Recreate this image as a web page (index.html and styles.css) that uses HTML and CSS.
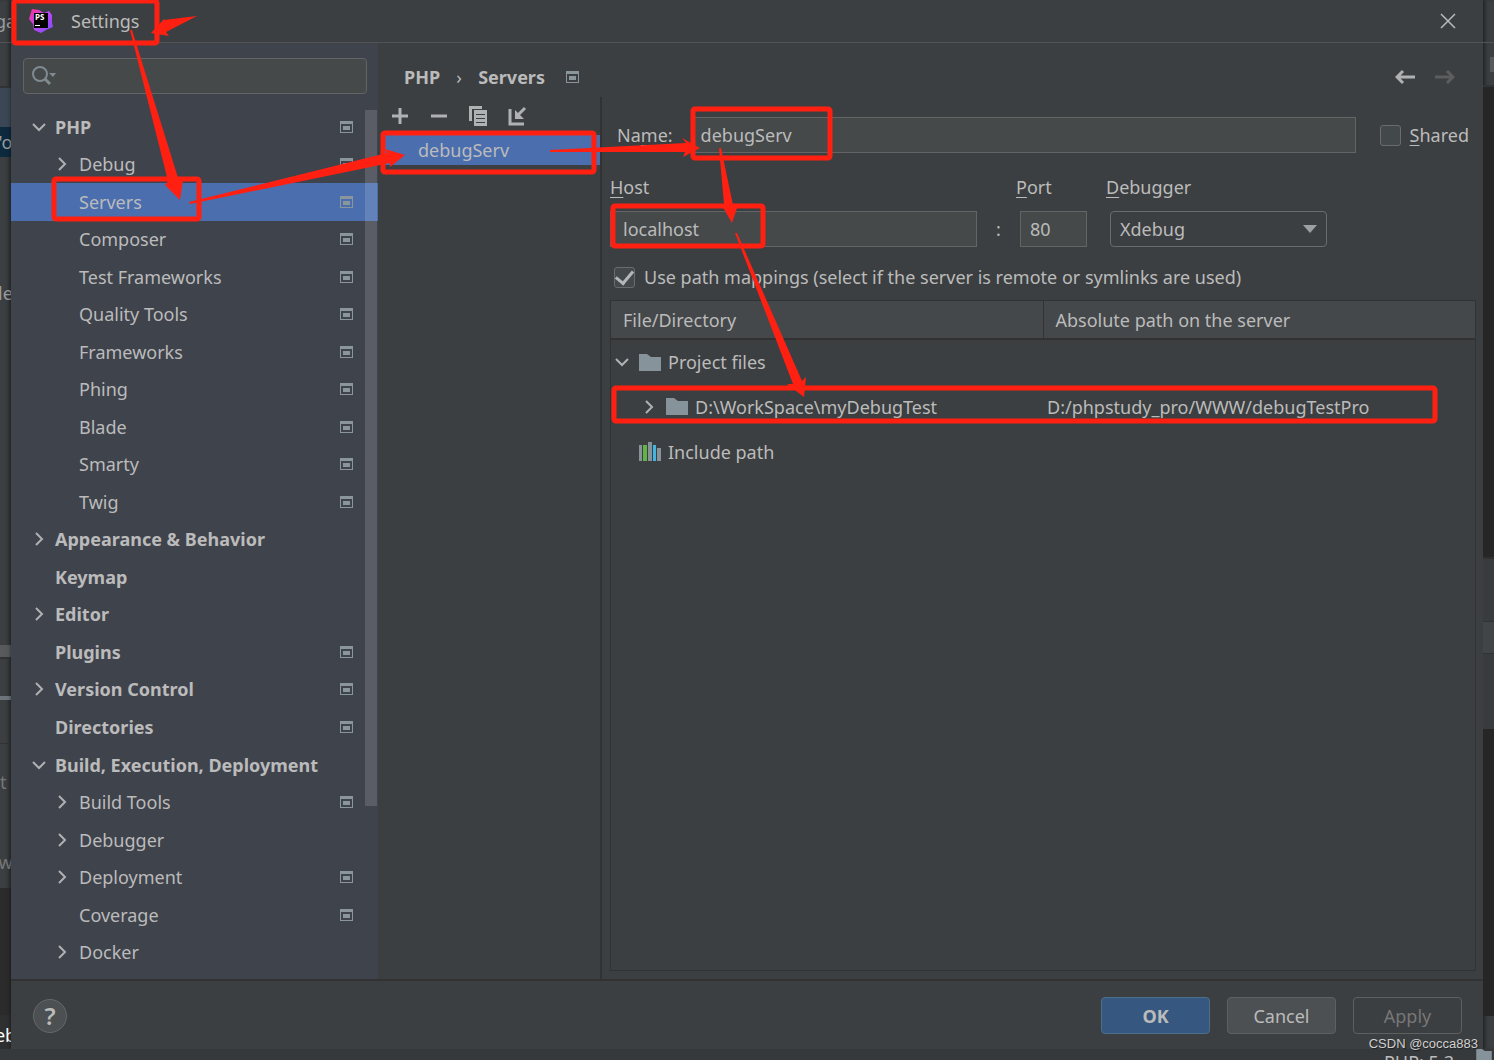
FILE: index.html
```html
<!DOCTYPE html>
<html lang="en">
<head>
<meta charset="utf-8">
<title>Settings</title>
<link rel="stylesheet" href="styles.css">
</head>
<body>
<svg class="defs" aria-hidden="true">
  <symbol id="scope" viewBox="0 0 13 12"><path fill="#8a959c" fill-rule="evenodd" d="M0 0h13v12H0zM1 3v8h11V3z"/><path fill="#8a959c" d="M3 5h7v4H3z"/></symbol>
  <symbol id="right" viewBox="0 0 14 14"><path d="M4 1l6 6-6 6" fill="none" stroke="#afb1b3" stroke-width="2"/></symbol>
  <symbol id="down" viewBox="0 0 14 14"><path d="M1 4l6 6 6-6" fill="none" stroke="#afb1b3" stroke-width="2"/></symbol>
  <symbol id="folder" viewBox="0 0 22 17"><path d="M0 0h8l4 3h10v14H0z" fill="#87939a"/></symbol>
</svg>
<div class="desktop">
  <div class="edge left" aria-hidden="true">
    <span class="l1">ga</span><span class="l2"></span><span class="l3"></span><span class="l4">'o</span><span class="l5">le</span><span class="l6"></span><span class="l7"></span><span class="l8"></span><span class="l9">t</span><span class="l10">w</span><span class="l11"></span><span class="l12">eb</span>
  </div>
  <main class="dialog">
    <header class="titlebar">
      <svg class="logo" viewBox="0 0 24 24">
        <defs><linearGradient id="lg" x1="0" y1="0" x2="1" y2="1"><stop offset="0" stop-color="#ff318c"/><stop offset=".5" stop-color="#b74af7"/><stop offset="1" stop-color="#7b4dff"/></linearGradient></defs>
        <path fill="url(#lg)" d="M3 0l7 1 5 3 5-2 3 4v7l1 5-7 3-5 3-7-3-1-6-4-5z"/>
        <path d="M5 4h14v15H5z"/>
        <text class="logo-text" x="6" y="11">PS</text>
        <path fill="#fff" d="M6 16h5v1H6z"/>
      </svg>
      <h1>Settings</h1>
      <button class="icon-button close" aria-label="Close"><svg width="16" height="16" viewBox="0 0 16 16"><path d="M1 1l14 14M15 1L1 15" stroke="#b8babc" stroke-width="1.5"/></svg></button>
    </header>
    <div class="content">
      <nav class="sidebar">
        <label class="search">
          <svg width="26" height="20" viewBox="0 0 26 20"><circle cx="8" cy="8" r="7" fill="none" stroke="#7f8b91" stroke-width="2"/><path d="M13 13l5 5" stroke="#7f8b91" stroke-width="3"/><path d="M17 7h7l-3 4z" fill="#7f8b91"/></svg>
          <input type="text" aria-label="Search settings">
        </label>
        <ul class="tree">
          <li class="top"><button><svg class="chev"><use href="#down"/></svg><span>PHP</span><svg class="scope"><use href="#scope"/></svg></button></li>
          <li><button><svg class="chev"><use href="#right"/></svg><span>Debug</span><svg class="scope"><use href="#scope"/></svg></button></li>
          <li class="selected"><button><i class="chev"></i><span>Servers</span><svg class="scope"><use href="#scope"/></svg></button></li>
          <li><button><i class="chev"></i><span>Composer</span><svg class="scope"><use href="#scope"/></svg></button></li>
          <li><button><i class="chev"></i><span>Test Frameworks</span><svg class="scope"><use href="#scope"/></svg></button></li>
          <li><button><i class="chev"></i><span>Quality Tools</span><svg class="scope"><use href="#scope"/></svg></button></li>
          <li><button><i class="chev"></i><span>Frameworks</span><svg class="scope"><use href="#scope"/></svg></button></li>
          <li><button><i class="chev"></i><span>Phing</span><svg class="scope"><use href="#scope"/></svg></button></li>
          <li><button><i class="chev"></i><span>Blade</span><svg class="scope"><use href="#scope"/></svg></button></li>
          <li><button><i class="chev"></i><span>Smarty</span><svg class="scope"><use href="#scope"/></svg></button></li>
          <li><button><i class="chev"></i><span>Twig</span><svg class="scope"><use href="#scope"/></svg></button></li>
          <li class="top"><button><svg class="chev"><use href="#right"/></svg><span>Appearance &amp; Behavior</span></button></li>
          <li class="top"><button><i class="chev"></i><span>Keymap</span></button></li>
          <li class="top"><button><svg class="chev"><use href="#right"/></svg><span>Editor</span></button></li>
          <li class="top"><button><i class="chev"></i><span>Plugins</span><svg class="scope"><use href="#scope"/></svg></button></li>
          <li class="top"><button><svg class="chev"><use href="#right"/></svg><span>Version Control</span><svg class="scope"><use href="#scope"/></svg></button></li>
          <li class="top"><button><i class="chev"></i><span>Directories</span><svg class="scope"><use href="#scope"/></svg></button></li>
          <li class="top"><button><svg class="chev"><use href="#down"/></svg><span>Build, Execution, Deployment</span></button></li>
          <li><button><svg class="chev"><use href="#right"/></svg><span>Build Tools</span><svg class="scope"><use href="#scope"/></svg></button></li>
          <li><button><svg class="chev"><use href="#right"/></svg><span>Debugger</span></button></li>
          <li><button><svg class="chev"><use href="#right"/></svg><span>Deployment</span><svg class="scope"><use href="#scope"/></svg></button></li>
          <li><button><i class="chev"></i><span>Coverage</span><svg class="scope"><use href="#scope"/></svg></button></li>
          <li><button><svg class="chev"><use href="#right"/></svg><span>Docker</span></button></li>
        </ul>
        <div class="scrollbar"></div>
      </nav>
      <section class="page">
        <div class="crumbs">
          <b>PHP</b><span class="sep">›</span><b>Servers</b><svg class="scope"><use href="#scope"/></svg>
          <span class="history">
            <button class="icon-button" aria-label="Back"><svg width="20" height="16" viewBox="0 0 20 16"><path d="M20 8H2M8 2L2 8l6 6" fill="none" stroke="#afb1b3" stroke-width="3"/></svg></button>
            <button class="icon-button" aria-label="Forward" disabled><svg width="20" height="16" viewBox="0 0 20 16"><path d="M0 8h18M12 2l6 6-6 6" fill="none" stroke="#5b5d5f" stroke-width="3"/></svg></button>
          </span>
        </div>
        <div class="split">
          <div class="servers">
            <div class="toolbar">
              <button class="icon-button" aria-label="Add"><svg width="20" height="20" viewBox="0 0 20 20"><path d="M10 2v16M2 10h16" stroke="#afb1b3" stroke-width="3"/></svg></button>
              <button class="icon-button" aria-label="Remove"><svg width="20" height="20" viewBox="0 0 20 20"><path d="M2 10h16" stroke="#afb1b3" stroke-width="3"/></svg></button>
              <button class="icon-button" aria-label="Copy"><svg width="20" height="20" viewBox="0 0 20 20"><path d="M1 0h13v3H4v12H1z" fill="#afb1b3"/><path fill="#afb1b3" fill-rule="evenodd" d="M6 4h13v16H6zM8 8v1h9V8zM8 12v1h9v-1zM8 16v1h9v-1z"/></svg></button>
              <button class="icon-button" aria-label="Import"><svg width="20" height="20" viewBox="0 0 20 20"><path d="M3 3v15h14" fill="none" stroke="#afb1b3" stroke-width="3"/><path d="M18 2l-8 8" stroke="#afb1b3" stroke-width="3"/><path d="M8 4v9h9z" fill="#afb1b3"/></svg></button>
            </div>
            <ul class="server-list"><li><button>debugServ</button></li></ul>
          </div>
          <form class="form">
            <div class="name-row">
              <label for="name">Na<u>m</u>e:</label>
              <input id="name" type="text" value="debugServ">
              <label class="check"><input type="checkbox"><span><u>S</u>hared</span></label>
            </div>
            <div class="fields">
              <label for="host"><u>H</u>ost</label><span></span><label for="port"><u>P</u>ort</label><label for="debugger"><u>D</u>ebugger</label>
              <input id="host" type="text" value="localhost">
              <span class="colon">:</span>
              <input id="port" type="text" value="80">
              <span class="select"><select id="debugger"><option>Xdebug</option></select><svg width="14" height="8" viewBox="0 0 14 8"><path d="M0 0h14L7 8z" fill="#9da0a2"/></svg></span>
            </div>
            <label class="check mappings"><input type="checkbox" checked><span>Use path mappings (select if the server is remote or symlinks are used)</span></label>
            <div class="table-box">
              <table>
                <thead><tr><th>File/Directory</th><th>Absolute path on the server</th></tr></thead>
                <tbody>
                  <tr><td><div class="cell"><svg class="chev"><use href="#down"/></svg><svg class="kind"><use href="#folder"/></svg>Project files</div></td><td></td></tr>
                  <tr><td><div class="cell nested"><svg class="chev"><use href="#right"/></svg><svg class="kind"><use href="#folder"/></svg>D:\WorkSpace\myDebugTest</div></td><td>D:/phpstudy_pro/WWW/debugTestPro</td></tr>
                  <tr><td><div class="cell"><i class="chev"></i><svg class="kind library" viewBox="0 0 22 19"><path fill="#87939a" d="M0 3h3v16H0zM9 0h4v19H9zM18 6h4v13h-4z"/><path fill="#62b543" d="M4 3h4v16H4z"/><path fill="#40b6e0" d="M14 3h3v16h-3z"/></svg>Include path</div></td><td></td></tr>
                </tbody>
              </table>
            </div>
          </form>
        </div>
      </section>
    </div>
    <footer class="footer">
      <button class="help" aria-label="Help">?</button>
      <button class="button primary">OK</button>
      <button class="button">Cancel</button>
      <button class="button disabled" disabled>Apply</button>
    </footer>
  </main>
  <div class="edge right" aria-hidden="true">
    <span class="r1"></span><span class="r2"><i></i></span><span class="r3"></span><span class="r4"></span><span class="r5"></span><span class="r6"></span><span class="r7"></span><span class="r8"></span>
  </div>
  <div class="statusbar"><span>PHP: 5.3</span><svg width="20" height="12"><use href="#folder"/></svg></div>
</div>
<svg class="marks" viewBox="0 0 1494 1060" aria-hidden="true">
  <g fill="none" stroke="#ff2012" stroke-width="5">
    <rect x="14" y="1" width="143" height="42" rx="2"/>
    <rect x="54" y="179" width="145" height="40" rx="2"/>
    <rect x="383" y="133" width="211" height="39" rx="2"/>
    <rect x="693" y="109" width="137" height="49" rx="2"/>
    <rect x="613" y="206" width="150" height="40" rx="2"/>
    <rect x="614" y="388" width="821" height="33" rx="2"/>
  </g>
  <g fill="#ff2012">
    <path d="M197 16l-33 4 1-2-14 15 18 3-3-4z"/>
    <path d="M130 30l38 151-3 4 15 15 3-20-4 1-47-151z"/>
    <path d="M189 202l198-49-2-4 20 6-15 12v-4L190 204z"/>
    <path d="M550 150l136-7-4-5 18 10-17 9 2-5-135 0z"/>
    <path d="M719 148l5 56h-3l11 19 5-15-4-3-12-57z"/>
    <path d="M735 233l58 151h-6l17 13 2-20-4 4-65-148z"/>
  </g>
</svg>
<div class="watermark">CSDN @cocca883</div>
</body>
</html>
```
FILE: styles.css
```css
* { box-sizing: border-box; }

body {
  margin: 0;
  background: #3c3f41;
  color: #bbbbbb;
  font: 18px/24px "Noto Sans", "Open Sans", sans-serif;
  overflow: hidden;
}

button, input, select { font: inherit; color: inherit; margin: 0; }
button { background: none; border: 0; padding: 0; text-align: left; }
ul { list-style: none; margin: 0; padding: 0; }
svg { flex: none; display: block; }
u { text-decoration-thickness: 1px; text-underline-offset: 3px; }
.defs { position: absolute; width: 0; height: 0; }

.desktop {
  display: grid;
  grid-template-columns: 11px minmax(0, 1fr) 11px;
  grid-template-rows: 1fr 11px;
  height: 100vh;
}

/* Strips of the editor window behind the dialog */
.edge { display: flex; flex-direction: column; overflow: hidden; min-height: 0; }
.edge span { display: flex; align-items: center; justify-content: center; flex: none; white-space: nowrap; color: #9a9c9e; }
.left { box-shadow: inset -3px 0 3px #0003; }
.right { box-shadow: inset 3px 0 3px #0003; }
.l1 { height: 43px; border-bottom: 1px solid #515355; }
.l2 { height: 45px; border-bottom: 2px solid #303234; }
.l3 { height: 39px; background: #3b4754; }
.l4 { height: 30px; background: #0d293e; }
.l5 { height: 272px; margin-bottom: 216px; }
.l6 { height: 12px; background: #57595b; }
.l7 { height: 39px; border-top: 2px solid #303234; }
.l8 { height: 4px; background: #6e747c; }
.l9 { height: 76px; margin-top: 43px; border-top: 1px solid #323232; }
.edge .l9, .edge .l10 { color: #777; }
.edge .l9 { justify-content: flex-start; }
.l10 { height: 69px; padding-top: 16px; }
.l11 { height: 127px; background: #2b2b2b; }
.edge .l12 { height: 34px; padding-top: 5px; background: #2d2f31; color: #fff; }
.edge .r2 { justify-content: flex-end; }
.r1 { height: 43px; border-bottom: 1px solid #515355; }
.r2 { height: 44px; border-bottom: 2px solid #303234; }
.r2 i { width: 4px; height: 15px; background: #57595b; }
.r3 { height: 470px; background: #262626; }
.r4 { height: 64px; border-top: 2px solid #303030; }
.r5 { height: 33px; background: #414547; border: solid #323232; border-width: 1px 0; }
.r6 { height: 75px; }
.edge.right .r4, .edge.right .r6 { background-color: #393b3e; }
.r7 { height: 287px; background: #262626; }
.r8 { flex: 1; }

.statusbar {
  grid-column: 1 / -1;
  display: flex;
  justify-content: flex-end;
  gap: 20px;
  background: #36393b;
  overflow: hidden;
  line-height: 26px;
}

.dialog {
  display: flex;
  flex-direction: column;
  min-width: 0;
  min-height: 0;
  background: #3c3f41;
  box-shadow: 0 0 4px #0008;
}

.titlebar {
  display: flex;
  align-items: center;
  height: 43px;
  padding: 0 27px 0 18px;
  border-bottom: 1px solid #515355;
}
.titlebar h1 { margin: 0 auto 0 18px; font-size: 18px; font-weight: 400; }
.logo { width: 24px; height: 24px; }
.logo-text { fill: #fff; font: bold 8px "Noto Sans", sans-serif; }
.icon-button { display: flex; align-items: center; justify-content: center; }

.content { display: flex; flex: 1; min-height: 0; }

.sidebar {
  position: relative;
  display: flex;
  flex-direction: column;
  gap: 14px;
  width: 367px;
  flex: none;
  padding: 15px 0 8px;
  background: #3f434c;
}
.search {
  display: flex;
  align-items: center;
  gap: 4px;
  height: 36px;
  margin: 0 11px 0 12px;
  padding: 0 8px;
  border: 1px solid #646464;
  border-radius: 4px;
  background: #45494a;
}
.search input { flex: 1; min-width: 0; border: 0; background: none; outline: 0; }
.tree { display: flex; flex-direction: column; flex: 1; min-height: 0; }
.tree li { display: flex; flex: 1; min-height: 0; padding-left: 44px; }
.tree li.top { padding-left: 21px; font-weight: 700; }
.tree li.selected { background: #4b6eaf; }
.tree button { display: flex; align-items: center; flex: 1; gap: 10px; padding-right: 25px; }
.tree .top button { gap: 9px; }
.chev { width: 14px; height: 14px; flex: none; }
.scope { width: 13px; height: 12px; }
.tree .scope { margin-left: auto; }
.scrollbar {
  position: absolute;
  top: 67px;
  right: 1px;
  width: 12px;
  height: 696px;
  background: #ffffff24;
}

.page { display: flex; flex-direction: column; flex: 1; min-width: 0; }
.crumbs { display: flex; align-items: center; height: 54px; padding: 14px 28px 0 26px; }
.crumbs .sep { width: 38px; text-align: center; }
.crumbs .scope { margin-left: 21px; }
.history { display: flex; gap: 20px; margin-left: auto; }

.split { display: flex; flex: 1; min-height: 0; }
.servers { width: 224px; flex: none; border-right: 2px solid #323232; }
.toolbar { display: flex; gap: 19px; height: 38px; padding: 0 12px; align-items: center; }
.server-list { padding-left: 4px; }
.server-list button { display: block; width: 100%; height: 30px; padding: 0 36px; background: #4b6eaf; }

.form { display: flex; flex-direction: column; flex: 1; min-width: 0; padding: 20px 7px 8px 8px; }
.form input[type="text"] {
  height: 36px;
  min-width: 0;
  padding: 0 9px;
  border: 1px solid #646464;
  background: #45494a;
  outline: 0;
}
.name-row { display: flex; align-items: center; padding-left: 7px; }
.name-row > input { flex: 1; margin: 0 24px 0 18px; }
.check { display: flex; align-items: center; gap: 9px; }
.name-row .check { padding-right: 7px; }
.check input {
  appearance: none;
  display: grid;
  place-items: center;
  width: 21px;
  height: 21px;
  border: 1px solid #6b6b6b;
  border-radius: 3px;
  background: #43494a;
}
.check input:checked::after {
  content: "";
  width: 8px;
  height: 14px;
  border: solid #b4b6b8;
  border-width: 0 3px 3px 0;
  transform: translateY(-2px) rotate(40deg);
}
.fields {
  display: grid;
  grid-template-columns: minmax(0, 1fr) 39px 90px 217px;
  row-gap: 12px;
  align-items: center;
  margin: 22px 153px 0 0;
}
.fields #port { width: 67px; margin-left: 4px; }
.form #host { padding-left: 12px; }
.colon { text-align: center; padding-left: 4px; }
.select { position: relative; display: flex; margin-left: 4px; margin-right: -4px; }
.select select {
  appearance: none;
  width: 100%;
  height: 36px;
  padding: 0 9px;
  border: 1px solid #6b6b6b;
  border-radius: 4px;
  background: #3c3f41;
}
.select svg { position: absolute; right: 10px; top: 14px; pointer-events: none; }
.mappings { margin: 18px 0 11px 4px; }
.table-box { flex: 1; min-height: 0; border: 1px solid #323232; }
table { width: 100%; border-collapse: collapse; table-layout: fixed; }
th { height: 38px; padding: 0 12px; text-align: left; font-weight: 400; background: #45484a; border-bottom: 2px solid #323232; }
th + th { border-left: 1px solid #323232; }
td { height: 45px; padding: 0 4px; }
.cell { display: flex; align-items: center; gap: 7px; }
.nested { padding-left: 27px; }
.cell .chev { margin-right: 3px; }
.kind { width: 22px; height: 17px; }
.library { height: 19px; }

.footer {
  display: flex;
  align-items: center;
  gap: 17px;
  height: 70px;
  flex: none;
  padding: 1px 21px 0 22px;
  border-top: 2px solid #323232;
}
.help {
  width: 34px;
  height: 34px;
  margin-right: auto;
  border: 1px solid #656769;
  border-radius: 50%;
  background: #4c5052;
  text-align: center;
  font-size: 24px;
  font-weight: 600;
}
.button { width: 109px; height: 37px; border: 1px solid #5e6060; border-radius: 4px; background: #4c5052; text-align: center; }
.primary { background: #365880; border-color: #4c708c; font-weight: 700; }
.disabled { background: none; color: #777777; }

/* Hand-drawn callouts and the publisher's mark lie over the window */
.marks { position: absolute; top: 0; left: 0; width: 1494px; height: 1060px; pointer-events: none; }
.watermark { position: absolute; right: 16px; bottom: 6px; font: 13px/20px "Liberation Sans", sans-serif; color: #d0d0d0; text-shadow: 1px 1px 1px #0008; }
```
